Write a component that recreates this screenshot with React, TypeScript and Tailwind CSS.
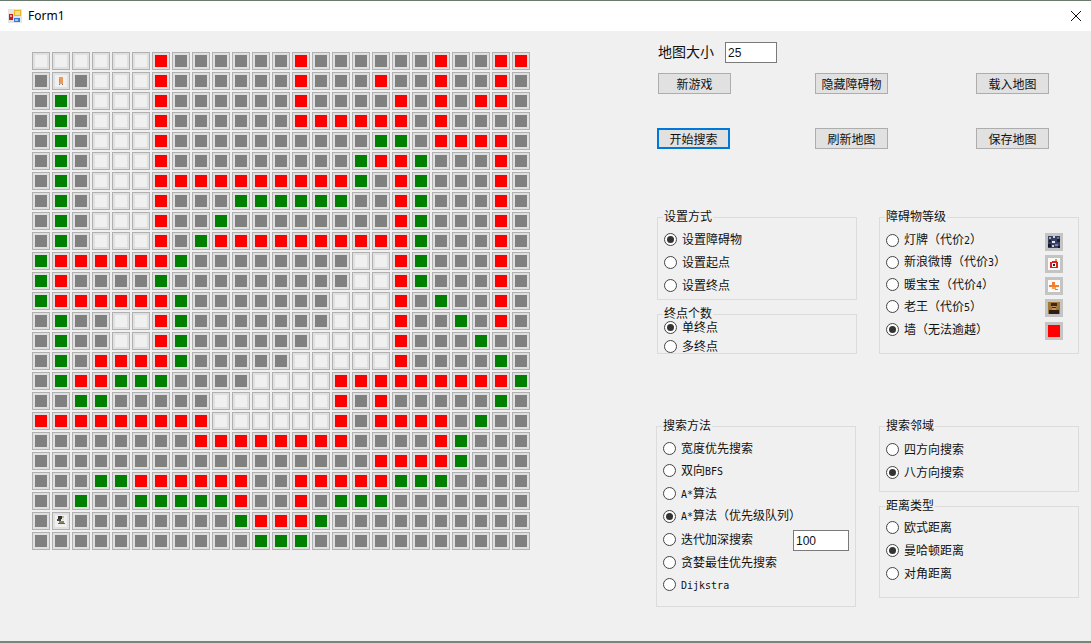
const CJK = '"Noto Sans CJK SC", sans-serif';

// e empty, g gray, r wall, n path, S start, C end
const grid = [
  "eeeeeergggggg" + "rggggggrggrr",
  "gSgeeergggggg" + "rgggrggrggrg",
  "gngeeergggggg" + "rggggrgrgrrg",
  "gngeeergggggg" + "rrrrrrgrgggg",
  "gngeeergggggg" + "ggggnngrrrrg",
  "gngeeergggggg" + "gggnrrngggrg",
  "gngeeerrrrrrr" + "rrrngrngggrg",
  "gngeeergggnnn" + "nnnggrngggrg",
  "gngeeerggnggg" + "gggggrngggrg",
  "gngeeergnrrrr" + "rrrrrrngggrg",
  "nrrrrrrnggggg" + "gggeerngggrg",
  "nrggggngggggg" + "gggeerngggrg",
  "nrrrrrrnggggg" + "ggeeergnggrg",
  "gnggeernggggg" + "ggeeerggngrg",
  "gnggeernggggg" + "geeeergggngg",
  "gngrrrrnggggg" + "eeeeerggggng",
  "gnrrnnnggggee" + "eerrrrrrrrrn",
  "ggnngggggeeee" + "eergrgggggng",
  "rrrrrrrrreeee" + "eergrrrrgngg",
  "ggggggggrrrrr" + "rrrggggrnggg",
  "ggggggggggggg" + "ggggrrrrnggg",
  "gggnnrrrrrrgg" + "rrrrrnnngggg",
  "ggnggnnnnnrgg" + "rgnnnggggggg",
  "gCggggggggnrr" + "rngggggggggg",
  "gggggggggggnn" + "nggggggggggg",
];

const fill: Record<string, string> = {
  e: "bg-[#f0f0f0]",
  g: "bg-[#808080]",
  r: "bg-[#ff0000]",
  n: "bg-[#008000]",
  S: "bg-[#f0f0f0]",
  C: "bg-[#f0f0f0]",
};

function StartSprite() {
  return (
    <svg width="12" height="12" viewBox="0 0 12 12" shapeRendering="crispEdges">
      <rect x="4" y="2" width="4" height="7" fill="#ee9955" />
      <rect x="4" y="4" width="1" height="3" fill="#c98a5a" />
      <rect x="4" y="9" width="1" height="1" fill="#777" />
      <rect x="7" y="9" width="1" height="1" fill="#777" />
    </svg>
  );
}

function EndSprite() {
  return (
    <svg width="12" height="12" viewBox="0 0 12 12" shapeRendering="crispEdges">
      <rect x="3" y="1" width="4" height="3" fill="#333" />
      <rect x="7" y="1" width="2" height="2" fill="#c9b48a" />
      <rect x="2" y="4" width="4" height="2" fill="#444" />
      <rect x="6" y="4" width="3" height="1" fill="#ddd" />
      <rect x="4" y="6" width="5" height="2" fill="#8a8a55" />
      <rect x="3" y="8" width="7" height="1" fill="#66663a" />
    </svg>
  );
}

function Cell({ kind }: { kind: string }) {
  return (
    <div className="w-[18px] h-[18px] border border-[#b0b0b0] bg-[#e0e0e0] flex items-center justify-center">
      <div className={`w-3 h-3 ${fill[kind]}`}>
        {kind === "S" && <StartSprite />}
        {kind === "C" && <EndSprite />}
      </div>
    </div>
  );
}

// latin runs are half width in the original font
function Txt({ children }: { children: string }) {
  return (
    <span>
      {children.split(/([\x00-\x7f]+)/).map((part, i) =>
        /^[\x00-\x7f]+$/.test(part) ? (
          <span key={i} className="font-['DejaVu_Sans_Mono',monospace] text-[10px]">
            {part}
          </span>
        ) : (
          <span key={i}>{part}</span>
        ),
      )}
    </span>
  );
}

function Radio({ label, checked, extra }: { label: string; checked?: boolean; extra?: React.ReactNode }) {
  return (
    <div className="flex items-center h-4">
      <span className="w-[13px] h-[13px] rounded-full border border-[#444] bg-white flex items-center justify-center shrink-0">
        {checked && <span className="w-[7px] h-[7px] rounded-full bg-[#333]" />}
      </span>
      <span className="ml-[5px] whitespace-nowrap leading-4">
        <Txt>{label}</Txt>
      </span>
      {extra}
    </div>
  );
}

function Group({ title, className, children }: { title: string; className: string; children: React.ReactNode }) {
  return (
    <div className={`relative w-[200px] border border-[#dcdcdc] ${className}`}>
      <span className="absolute -top-[8px] left-[5px] bg-[#f0f0f0] px-px leading-[12px] whitespace-nowrap">{title}</span>
      {children}
    </div>
  );
}

function Btn({ label, focused, className = "" }: { label: string; focused?: boolean; className?: string }) {
  const edge = focused ? "border-2 border-[#0078d7]" : "border border-[#adadad]";
  return (
    <div className={`w-[73px] h-[21px] bg-[#e1e1e1] flex items-center justify-center ${edge} ${className}`}>
      {label}
    </div>
  );
}

function Sprite({ children }: { children: React.ReactNode }) {
  return (
    <div className="ml-auto mt-[3px] w-[18px] h-[18px] bg-[#c4c4c4] flex items-center justify-center">
      <svg width="12" height="12" viewBox="0 0 12 12" shapeRendering="crispEdges">
        {children}
      </svg>
    </div>
  );
}

export default function App() {
  return (
    <div className="w-[1091px] h-[643px] flex flex-col bg-[#f0f0f0] text-[12px] text-[#111] overflow-hidden" style={{ fontFamily: CJK }}>
      <header className="h-[31px] shrink-0 bg-white border-t border-[#6b7b6b] flex items-center pl-2 pr-[10px]">
        <svg width="14" height="14" viewBox="0 0 14 14" shapeRendering="crispEdges">
          <rect width="14" height="14" fill="#e4e4e4" />
          <rect x="6" y="1" width="7" height="6" fill="#e8b820" />
          <rect x="7" y="2" width="5" height="4" fill="#f8e080" />
          <rect x="1" y="5" width="4" height="6" fill="#c02020" />
          <rect x="2" y="6" width="2" height="2" fill="#f0a0a0" />
          <rect x="6" y="9" width="6" height="4" fill="#3878d8" />
          <rect x="7" y="10" width="3" height="2" fill="#a8c8f0" />
        </svg>
        <span className="ml-[6px] font-['Noto_Sans',sans-serif] text-black">Form1</span>
        <svg className="ml-auto" width="10" height="10" viewBox="0 0 10 10">
          <path d="M0 0 L10 10 M10 0 L0 10" stroke="#111" strokeWidth="1" />
        </svg>
      </header>

      <main className="flex flex-1 border-b-2 border-[#7a857a]">
        <div className="ml-8 mt-[21px] self-start grid grid-cols-[repeat(25,18px)] gap-[2px]">
          {grid.map((row, y) => row.split("").map((kind, x) => <Cell key={`${y}-${x}`} kind={kind} />))}
        </div>

        <div className="ml-[127px] pt-[11px] flex flex-col">
          <div className="flex items-center h-[21px] pl-px">
            <span className="text-[14px] w-[67px] pb-[3px]">地图大小</span>
            <div className="w-[52px] h-[21px] border border-[#7a7a7a] bg-white flex items-center pl-[2px] font-['Liberation_Sans',sans-serif]">25</div>
          </div>
          <div className="flex mt-[10px] pl-px">
            <Btn label="新游戏" />
            <Btn label="隐藏障碍物" className="ml-[84px]" />
            <Btn label="载入地图" className="ml-[88px]" />
          </div>
          <div className="flex mt-[34px]">
            <Btn label="开始搜索" focused />
            <Btn label="刷新地图" className="ml-[85px]" />
            <Btn label="保存地图" className="ml-[88px]" />
          </div>

          <div className="flex gap-[22px] mt-[68px]">
            <div className="flex flex-col gap-[14px]">
              <Group title="设置方式" className="h-[83px] pt-[13px] pl-[6px] flex flex-col gap-[7px]">
                <Radio label="设置障碍物" checked />
                <Radio label="设置起点" />
                <Radio label="设置终点" />
              </Group>
              <Group title="终点个数" className="h-[40px] pt-1 pl-[6px] flex flex-col gap-[3px]">
                <Radio label="单终点" checked />
                <Radio label="多终点" />
              </Group>
            </div>
            <Group title="障碍物等级" className="h-[137px] pt-[13px] pl-[6px] pr-[15px] flex flex-col gap-[4.25px]">
              <div className="flex items-center h-[18px]">
                <Radio label="灯牌（代价2）" />
                <Sprite>
                  <rect width="12" height="12" fill="#39405f" />
                  <rect x="1" y="1" width="2" height="2" fill="#a0a8c8" />
                  <rect x="5" y="0" width="2" height="2" fill="#d0d4e8" />
                  <rect x="9" y="1" width="2" height="2" fill="#6a7098" />
                  <rect x="9" y="3" width="3" height="3" fill="#181c30" />
                  <rect x="1" y="4" width="2" height="2" fill="#181c30" />
                  <rect x="4" y="5" width="3" height="2" fill="#e8e8f4" />
                  <rect x="0" y="8" width="3" height="3" fill="#14182a" />
                  <rect x="4" y="9" width="2" height="2" fill="#c8cce4" />
                  <rect x="7" y="8" width="3" height="2" fill="#7080c0" />
                  <rect x="10" y="10" width="2" height="2" fill="#14182a" />
                </Sprite>
              </div>
              <div className="flex items-center h-[18px]">
                <Radio label="新浪微博（代价3）" />
                <Sprite>
                  <rect width="12" height="12" fill="#fafafa" />
                  <rect x="7" y="1" width="2" height="2" fill="#f0a030" />
                  <rect x="4" y="3" width="5" height="1" fill="#e02020" />
                  <rect x="2" y="4" width="8" height="6" fill="#e02020" />
                  <rect x="4" y="5" width="4" height="4" fill="#fff" />
                  <rect x="5" y="6" width="2" height="2" fill="#222" />
                </Sprite>
              </div>
              <div className="flex items-center h-[18px]">
                <Radio label="暖宝宝（代价4）" />
                <Sprite>
                  <rect width="12" height="12" fill="#fafafa" />
                  <rect x="4" y="2" width="3" height="3" fill="#f08030" />
                  <rect x="1" y="5" width="10" height="2" fill="#f08030" />
                  <rect x="4" y="7" width="4" height="2" fill="#f8a050" />
                  <rect x="7" y="9" width="3" height="1" fill="#f08030" />
                </Sprite>
              </div>
              <div className="flex items-center h-[18px]">
                <Radio label="老王（代价5）" />
                <Sprite>
                  <rect width="12" height="12" fill="#a07838" />
                  <rect x="3" y="1" width="6" height="3" fill="#3a2a18" />
                  <rect x="4" y="4" width="4" height="4" fill="#c89060" />
                  <rect x="4" y="5" width="4" height="1" fill="#402818" />
                  <rect x="1" y="8" width="10" height="4" fill="#2a2018" />
                </Sprite>
              </div>
              <div className="flex items-center h-[18px]">
                <Radio label="墙（无法逾越）" checked />
                <Sprite>
                  <rect width="12" height="12" fill="#ff0000" />
                </Sprite>
              </div>
            </Group>
          </div>

          <div className="flex gap-[22px] mt-[72px] -ml-px">
            <Group title="搜索方法" className="h-[181px] pt-[13px] pl-[6px] pr-[6px] flex flex-col gap-[6.83px]">
              <Radio label="宽度优先搜索" />
              <Radio label="双向BFS" />
              <Radio label="A*算法" />
              <Radio label="A*算法（优先级队列）" checked />
              <Radio
                label="迭代加深搜索"
                extra={
                  <div className="ml-auto w-14 h-[21px] -mt-[1px] -mb-1 shrink-0 border border-[#7a7a7a] bg-white flex items-center pl-[2px] font-['Liberation_Sans',sans-serif]">
                    100
                  </div>
                }
              />
              <Radio label="贪婪最佳优先搜索" />
              <Radio label="Dijkstra" />
            </Group>
            <div className="flex flex-col gap-[14px] ml-px">
              <Group title="搜索邻域" className="h-[66px] pt-[14px] pl-[6px] flex flex-col gap-[7px]">
                <Radio label="四方向搜索" />
                <Radio label="八方向搜索" checked />
              </Group>
              <Group title="距离类型" className="h-[92px] pt-[12px] pl-[6px] flex flex-col gap-[7px]">
                <Radio label="欧式距离" />
                <Radio label="曼哈顿距离" checked />
                <Radio label="对角距离" />
              </Group>
            </div>
          </div>
        </div>
      </main>
    </div>
  );
}
